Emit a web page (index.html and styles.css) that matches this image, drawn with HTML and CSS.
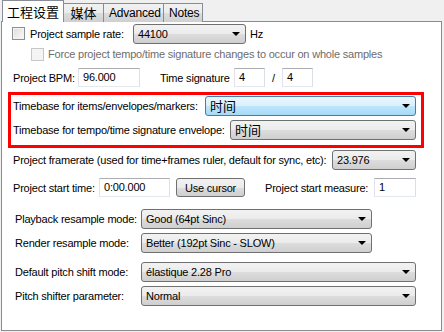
FILE: index.html
```html
<!DOCTYPE html>
<html>
<head>
<title>Project Settings</title>
<link rel="stylesheet" href="styles.css">
</head>
<body>

<div class="tabs">
    <div class="tab active">工程设置</div>
    <div class="tab cjk">媒体</div>
    <div class="tab">Advanced</div>
    <div class="tab">Notes</div>
</div>

<div class="panel">
    <div class="row row-rate">
        <span class="check"></span>
        <span class="lbl-rate">Project sample rate:</span>
        <div class="combo w-rate"><span>44100</span><i class="arrow"></i></div>
        <span class="hz">Hz</span>
    </div>

    <div class="row row-force">
        <span class="check disabled"></span>
        <span class="muted">Force project tempo/time signature changes to occur on whole samples</span>
    </div>

    <div class="row row-bpm">
        <span class="lbl lbl-bpm">Project BPM:</span>
        <div class="field w-bpm">96.000</div>
        <span class="lbl lbl-sig">Time signature</span>
        <div class="field w-sig">4</div>
        <span class="slash">/</span>
        <div class="field w-sig">4</div>
    </div>

    <div class="highlight">
        <div class="row">
            <span class="lbl lbl-tb1">Timebase for items/envelopes/markers:</span>
            <div class="combo focus grow"><span class="cjk">时间</span><i class="arrow"></i></div>
        </div>
        <div class="row row-tb2">
            <span class="lbl lbl-tb2">Timebase for tempo/time signature envelope:</span>
            <div class="combo grow"><span class="cjk">时间</span><i class="arrow"></i></div>
        </div>
    </div>

    <div class="row row-fps">
        <span class="lbl lbl-fps">Project framerate (used for time+frames ruler, default for sync, etc):</span>
        <div class="combo w-fps"><span>23.976</span><i class="arrow"></i></div>
    </div>

    <div class="row row-start">
        <span class="lbl lbl-start">Project start time:</span>
        <div class="field w-start">0:00.000</div>
        <button class="btn">Use cursor</button>
        <span class="lbl lbl-measure">Project start measure:</span>
        <div class="field w-measure">1</div>
    </div>

    <div class="row row-play">
        <span class="lbl lbl-mode">Playback resample mode:</span>
        <div class="combo w-mode"><span>Good (64pt Sinc)</span><i class="arrow"></i></div>
    </div>

    <div class="row row-render">
        <span class="lbl lbl-mode">Render resample mode:</span>
        <div class="combo w-mode"><span>Better (192pt Sinc - SLOW)</span><i class="arrow"></i></div>
    </div>

    <div class="row row-pitch">
        <span class="lbl lbl-mode">Default pitch shift mode:</span>
        <div class="combo w-pitch"><span>élastique 2.28 Pro</span><i class="arrow"></i></div>
    </div>

    <div class="row row-param">
        <span class="lbl lbl-mode">Pitch shifter parameter:</span>
        <div class="combo w-pitch"><span>Normal</span><i class="arrow"></i></div>
    </div>
</div>

</body>
</html>
```

FILE: styles.css
```css
body {
    margin: 0;
    background: #f0f0f0;
    font-family: "Liberation Sans", Arial, "Noto Sans CJK SC", sans-serif;
    font-size: 11px;
    letter-spacing: -0.2px;
    color: #000;
    width: 444px;
    height: 332px;
    overflow: hidden;
}
.cjk {
    font-family: "Noto Sans CJK SC", sans-serif;
    letter-spacing: 0;
}

/* tabs */
.tabs {
    display: flex;
    align-items: flex-end;
    height: 22px;
    padding-left: 2px;
    position: relative;
    z-index: 1;
}
.tab {
    box-sizing: border-box;
    height: 19px;
    line-height: 18px;
    padding: 0 5px;
    border: 1px solid #898c95;
    border-bottom: none;
    background: linear-gradient(#f2f2f2, #ebebeb 50%, #dddddd 50%, #cfcfcf);
    margin-left: -1px;
    font-size: 12px;
    text-align: center;
}
.tab.cjk {
    font-size: 13px;
    width: 41px;
}
.tab:nth-child(3) { width: 61px; }
.tab:nth-child(4) { width: 40px; }
.tab.active {
    width: 62px;
    height: 22px;
    line-height: 21px;
    background: #fff;
    font-family: "Noto Sans CJK SC", sans-serif;
    letter-spacing: 0;
    font-size: 13px;
    padding: 0;
    margin-left: 0;
}
.panel {
    margin: -1px 2px 0 1px;
    height: 308px;
    border: 1px solid #898c95;
    background: #fff;
}

/* rows */
.row {
    display: flex;
    align-items: center;
    height: 20px;
    white-space: nowrap;
}
.row-rate { margin-top: 2px; padding-left: 10px; height: 19px; }
.row-force { margin-top: 3px; padding-left: 29px; height: 16px; }
.row-bpm { margin-top: 6px; padding-left: 11px; height: 19px; }
.row-fps { margin-top: 2px; padding-left: 11px; }
.row-start { margin-top: 8px; padding-left: 11px; height: 19px; }
.row-play { margin-top: 12px; padding-left: 13px; }
.row-render { margin-top: 4px; padding-left: 13px; }
.row-pitch { margin-top: 9px; padding-left: 13px; }
.row-param { margin-top: 4px; padding-left: 13px; }
.row-tb2 { margin-top: 4px; }

.lbl-rate { margin-left: 5px; width: 103px; }
.hz { margin-left: 4px; }
.muted { margin-left: 4px; color: #6d6d6d; }
.lbl-bpm { width: 65px; }
.lbl-sig { margin-left: 20px; width: 74px; }
.slash { width: 17px; text-align: center; }
.lbl-tb1 { margin-left: 2px; width: 192px; }
.lbl-tb2 { margin-left: 2px; width: 217px; }
.lbl-fps { width: 319px; }
.lbl-start { width: 86px; }
.lbl-measure { margin-left: 20px; width: 109px; }
.lbl-mode { width: 126px; }

/* checkbox */
.check {
    width: 11px;
    height: 11px;
    border: 1px solid #8e8f8f;
    background: linear-gradient(135deg, #dcdcdc, #fbfbfb);
    box-shadow: inset 0 0 0 1px #f4f4f4;
}
.check.disabled {
    border-color: #c7c7c7;
    background: #f4f4f4;
}

/* text fields */
.field {
    box-sizing: border-box;
    height: 19px;
    line-height: 17px;
    padding-left: 4px;
    border: 1px solid;
    border-color: #abadb3 #dbdfe6 #e3e9ef #e2e3ea;
    background: #fff;
}
.w-bpm { width: 62px; }
.w-sig { width: 31px; }
.w-start { width: 71px; }
.w-measure { width: 42px; }

/* combo boxes */
.combo {
    position: relative;
    box-sizing: border-box;
    height: 20px;
    line-height: 18px;
    padding-left: 4px;
    border: 1px solid #707070;
    border-radius: 3px;
    background: linear-gradient(#f2f2f2, #ebebeb 50%, #dddddd 50%, #cfcfcf);
    overflow: hidden;
}
.combo .cjk { font-size: 13px; }
.combo.focus {
    border-color: #3c7fb1;
    background: linear-gradient(#eaf6fd, #d9f0fc 50%, #bee6fd 50%, #a7d9f5);
}
.arrow {
    position: absolute;
    right: 5px;
    top: 7px;
    width: 0;
    height: 0;
    border-left: 4px solid transparent;
    border-right: 4px solid transparent;
    border-top: 4px solid #000;
}
.grow { flex: 1; margin-right: 5px; }
.highlight {
    margin: 5px 0 0 6px;
    width: 416px;
    height: 56px;
    box-sizing: border-box;
    border: 3px solid #ff0000;
    padding-top: 1px;
}
.w-rate { width: 113px; }
.w-fps { width: 84px; }
.w-mode { width: 231px; }
.w-pitch { width: 275px; }

.btn {
    margin-left: 6px;
    width: 69px;
    height: 19px;
    padding: 0;
    font: inherit;
    letter-spacing: -0.2px;
    border: 1px solid #707070;
    border-radius: 3px;
    background: linear-gradient(#f2f2f2, #ebebeb 50%, #dddddd 50%, #cfcfcf);
}
```
